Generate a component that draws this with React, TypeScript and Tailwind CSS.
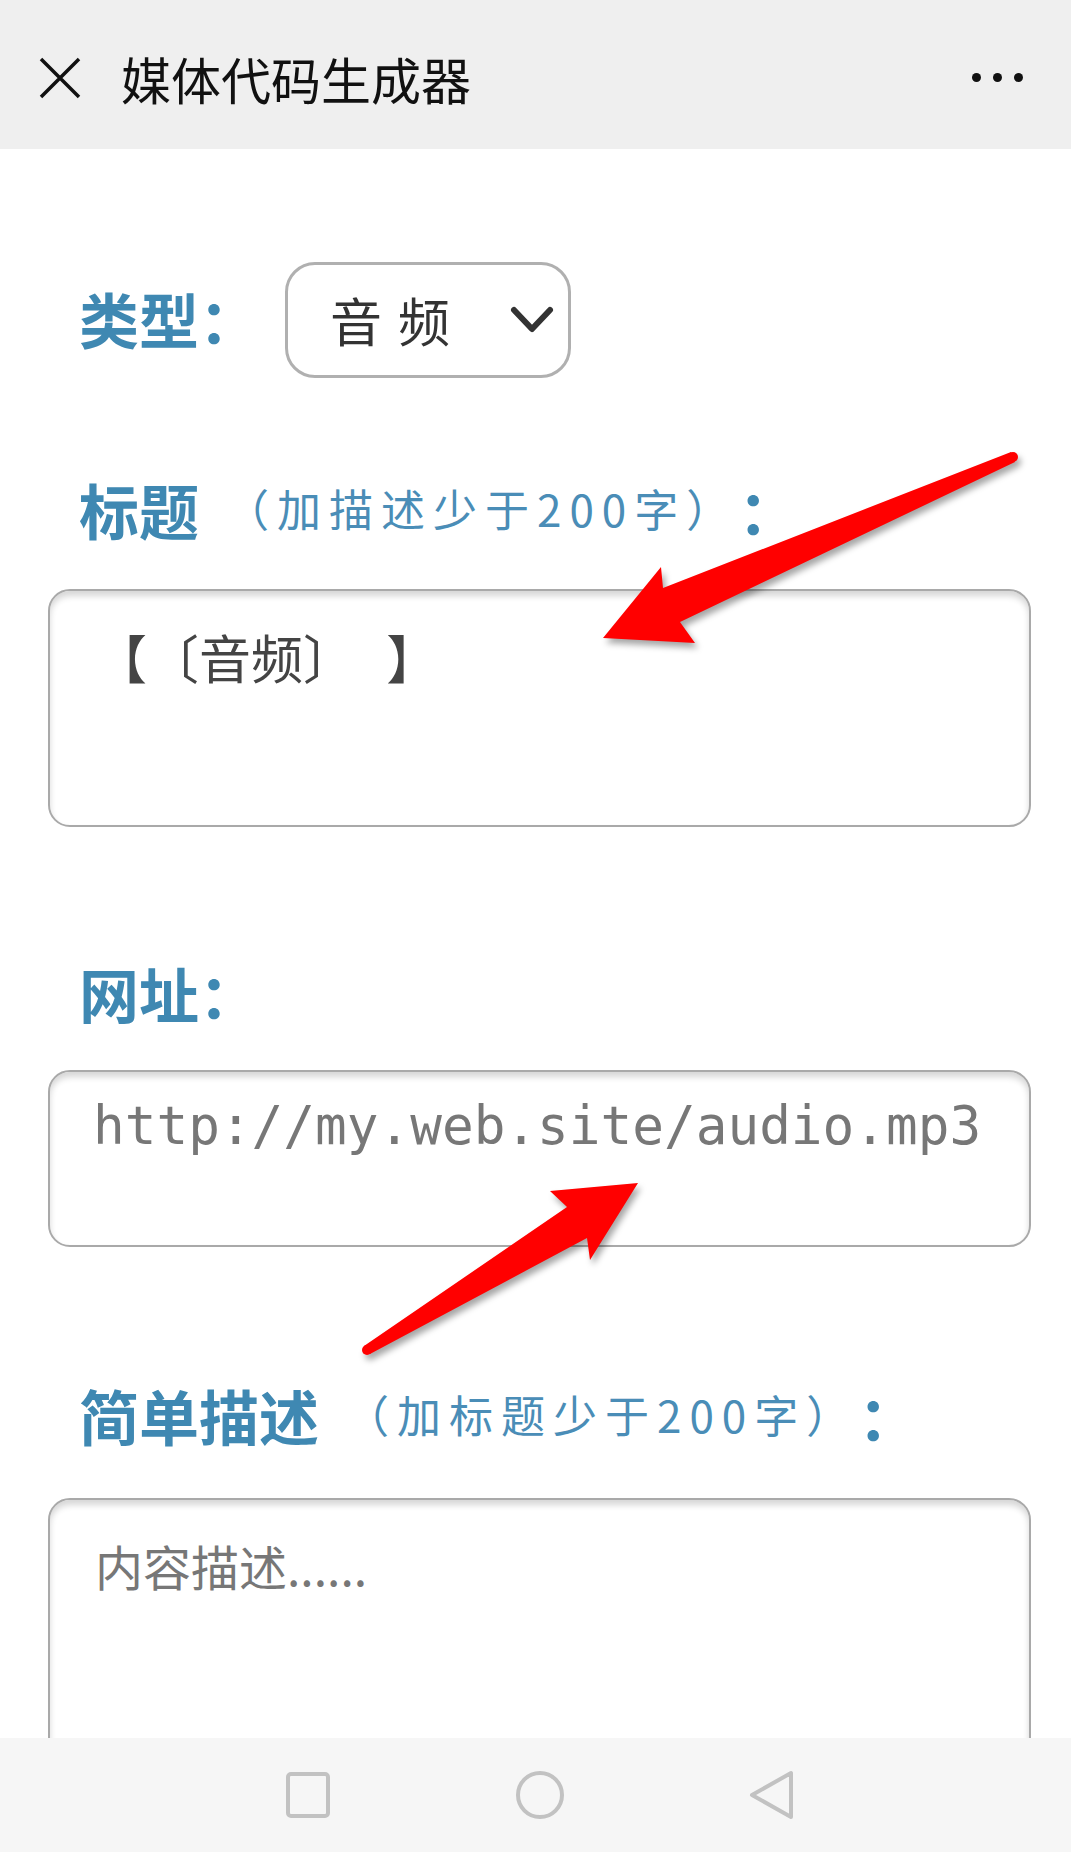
import React from "react";

const CJK = "font-['Noto_Sans_CJK_SC','Noto_Sans',sans-serif]";

function Label({ main, sub }: { main: string; sub?: string }) {
  return (
    <div className="flex items-start h-[60px] pl-[31px]">
      <span className="text-[60px] leading-[55px] font-bold text-[#3f88b2]">{main}</span>
      {sub && (
        <span className="ml-[26px] text-[44px] leading-[55px] tracking-[8px] text-[#4a8db7]">{sub}</span>
      )}
      <span className="text-[60px] leading-[55px] font-bold text-[#3f88b2]">：</span>
    </div>
  );
}

function Arrows() {
  return (
    <svg
      className="absolute inset-0 pointer-events-none"
      width={1071}
      height={1852}
      viewBox="0 0 1071 1852"
      style={{ filter: "drop-shadow(3px 5px 3px rgba(0,0,0,0.35))" }}
    >
      <g fill="#ff0000">
        <polygon points="1011,452 663,588 661,567 603,638 695,643 680,622 1015,462" />
        <circle cx="1013" cy="457" r="5" />
        <polygon points="364,1346 567,1207 550,1191 638,1183 590,1260 587,1238 370,1354" />
        <circle cx="367" cy="1350" r="5" />
      </g>
    </svg>
  );
}

export default function App() {
  return (
    <div className={`relative w-[1071px] h-[1852px] bg-white overflow-hidden flex flex-col [text-spacing-trim:space-all] ${CJK}`}>
      <header className="h-[149px] shrink-0 bg-[#efefef] flex items-center pl-[39px] pr-[48px] pt-[6px]">
        <svg width="42" height="42" viewBox="0 0 42 42" className="shrink-0">
          <path d="M2 2 L40 40 M40 2 L2 40" stroke="#111" strokeWidth="3.5" fill="none" />
        </svg>
        <span className="ml-[40px] text-[50px] leading-[60px] text-[#111]">媒体代码生成器</span>
        <div className="ml-auto flex items-center gap-[12px]">
          <span className="w-[9px] h-[9px] rounded-full bg-[#111]" />
          <span className="w-[9px] h-[9px] rounded-full bg-[#111]" />
          <span className="w-[9px] h-[9px] rounded-full bg-[#111]" />
        </div>
      </header>

      <main className="flex-1 overflow-hidden pl-[48px] pr-[40px] pt-[113px]">
        <div className="flex items-center h-[116px]">
          <div className="flex items-start h-[60px] pl-[31px]">
            <span className="text-[60px] leading-[55px] font-bold text-[#3f88b2]">类型</span>
            <span className="text-[60px] leading-[55px] font-bold text-[#3f88b2]">：</span>
          </div>
          <div className="ml-[26px] w-[286px] h-[116px] border-[3px] border-[#b0b0b0] rounded-[30px] flex items-center pl-[42px] pr-[14px]">
            <span className="text-[52px] leading-[60px] tracking-[16px] text-[#333]">音频</span>
            <svg width="44" height="28" viewBox="0 0 44 28" className="ml-auto">
              <path d="M4 4 L22 23 L40 4" stroke="#333" strokeWidth="6" strokeLinecap="round" strokeLinejoin="round" fill="none" />
            </svg>
          </div>
        </div>

        <div className="mt-[103px]">
          <Label main="标题" sub="（加描述少于200字）" />
        </div>
        <div className="mt-[48px] h-[238px] border-2 border-[#a9a9a9] rounded-[22px] shadow-[inset_0_5px_6px_rgba(0,0,0,0.16)] pl-[45px] pt-[36px]">
          <div className="text-[52px] leading-[60px] text-[#444] whitespace-pre">
            【〔音频〕  <span className="ml-[8px]">】</span>
          </div>
        </div>

        <div className="mt-[138px]">
          <Label main="网址" />
        </div>
        <div className="mt-[45px] h-[177px] border-2 border-[#a9a9a9] rounded-[22px] shadow-[inset_0_5px_6px_rgba(0,0,0,0.16)] pl-[43px] pt-[24px]">
          <div className="font-['DejaVu_Sans_Mono',monospace] text-[52.7px] leading-[60px] text-[#777] whitespace-pre">http://my.web.site/audio.mp3</div>
        </div>

        <div className="mt-[140px]">
          <Label main="简单描述" sub="（加标题少于200字）" />
        </div>
        <div className="mt-[51px] h-[300px] border-2 border-[#a9a9a9] rounded-[22px] shadow-[inset_0_5px_6px_rgba(0,0,0,0.16)] pl-[45px] pt-[35px]">
          <div className="text-[48px] leading-[60px] text-[#777]">内容描述......</div>
        </div>
      </main>

      <nav className="h-[114px] shrink-0 bg-[#f6f6f6] flex items-center justify-center gap-[184px] pl-[8px]">
        <svg width="46" height="48" viewBox="0 0 46 48">
          <rect x="3" y="3" width="40" height="42" rx="3" stroke="#c2c2c2" strokeWidth="4" fill="none" />
        </svg>
        <svg width="50" height="50" viewBox="0 0 50 50">
          <circle cx="25" cy="25" r="22" stroke="#c2c2c2" strokeWidth="4" fill="none" />
        </svg>
        <svg width="46" height="50" viewBox="0 0 46 50">
          <path d="M42 3 L42 47 L3 25 Z" stroke="#c2c2c2" strokeWidth="4" strokeLinejoin="round" fill="none" />
        </svg>
      </nav>

      <Arrows />
    </div>
  );
}
